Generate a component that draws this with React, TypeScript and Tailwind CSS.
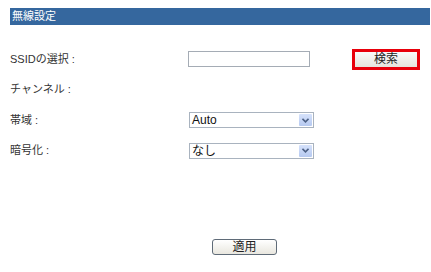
import React from "react";

const font = { fontFamily: '"Liberation Sans", "Noto Sans CJK JP", sans-serif' };

function SelectBox({ value }: { value: string }) {
  return (
    <div className="flex h-[16px] w-[125px] items-stretch border border-[#a9b3bf] bg-white">
      <div className="flex flex-1 items-center pl-[2px] text-[12px] leading-none text-[#111]">{value}</div>
      <div className="m-[1px] flex w-[13px] items-center justify-center rounded-[1px] bg-gradient-to-b from-[#d6e2fb] to-[#b6c9f0]">
        <svg width="7" height="5" viewBox="0 0 7 5">
          <path d="M0.5 0.8 L3.5 3.8 L6.5 0.8" fill="none" stroke="#4d6185" strokeWidth="1.6" />
        </svg>
      </div>
    </div>
  );
}

export default function App() {
  return (
    <div className="h-[272px] w-[431px] overflow-hidden bg-white pl-[10px] pt-[8px] pr-[1px]" style={font}>
      <div className="flex h-[17px] items-center bg-[#35679e] pl-[2px] text-[11px] text-white">無線設定</div>

      <div className="mt-[19px] flex h-[30px] items-center text-[11px] text-[#333]">
        <div className="w-[178px]">SSIDの選択 :</div>
        <div className="h-[16px] w-[122px] border border-[#a5acb5] bg-white" />
        <div className="ml-[42px] border-[3px] border-[#e8000b] p-0">
          <div className="flex h-[15px] w-[62px] items-center justify-center bg-gradient-to-b from-[#fafafa] to-[#e6e4dc] text-[12px] text-[#222]">
            検索
          </div>
        </div>
      </div>

      <div className="flex h-[31px] items-center text-[11px] text-[#333]">
        <div className="w-[178px]">チャンネル :</div>
      </div>

      <div className="flex h-[30px] items-center text-[11px] text-[#333]">
        <div className="w-[178px]">帯域 :</div>
        <div className="ml-[1px]">
          <SelectBox value="Auto" />
        </div>
      </div>

      <div className="flex h-[31px] items-center text-[11px] text-[#333]">
        <div className="w-[178px]">暗号化 :</div>
        <div className="ml-[1px]">
          <SelectBox value="なし" />
        </div>
      </div>

      <div className="mt-[73px] flex pl-[202px]">
        <div className="flex h-[16px] w-[65px] items-center justify-center rounded-[3px] border border-[#5f6b78] bg-gradient-to-b from-[#ffffff] to-[#e9e7df] text-[12px] text-[#222]">
          適用
        </div>
      </div>
    </div>
  );
}
